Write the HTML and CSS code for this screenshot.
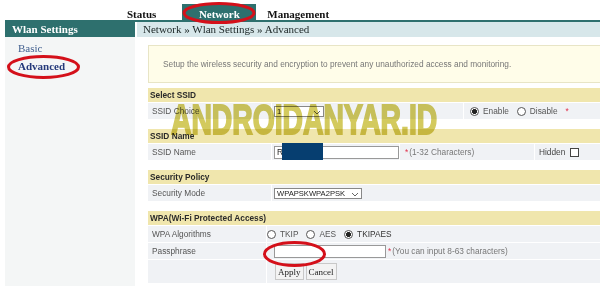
FILE: index.html
```html
<html><head><link rel="stylesheet" href="styles.css"></head><body>
<div class="topnav">
  <span class="tab">Status</span>
  <span class="tab tab-active">Network</span>
  <span class="tab">Management</span>
</div>
<div class="layout">
  <aside class="sidebar">
    <div class="side-title">Wlan Settings</div>
    <ul class="side-menu">
      <li>Basic</li>
      <li class="current">Advanced</li>
    </ul>
  </aside>
  <main class="main">
    <div class="crumb">Network &raquo; Wlan Settings &raquo; Advanced</div>
    <div class="content">
      <div class="intro">Setup the wireless security and encryption to prevent any unauthorized access and monitoring.</div>

      <div class="section">
        <div class="section-head">Select SSID</div>
        <div class="row row-ssid-choice">
          <div class="cell label">SSID Choice</div>
          <div class="cell">
            <span class="select-wrap sel-small">
              <select><option>1</option></select>
              <svg class="chev" width="8" height="5" viewBox="0 0 8 5"><path d="M1 1 L4 4 L7 1" fill="none" stroke="#666" stroke-width="1"/></svg>
            </span>
          </div>
          <div class="cell cell-radios">
            <input type="radio" name="ssid" checked><span class="opt">Enable</span>
            <input type="radio" name="ssid"><span class="opt">Disable</span>
            <span class="req">*</span>
          </div>
        </div>
      </div>

      <div class="section">
        <div class="section-head">SSID Name</div>
        <div class="row row-ssid-name">
          <div class="cell label">SSID Name</div>
          <div class="cell cell-ssid">
            <input type="text" class="text-in ssid-in" value="R">
            <span class="redact"></span>
          </div>
          <div class="cell cell-note"><span class="req">*</span>(1-32 Characters)</div>
          <div class="cell cell-hidden">Hidden <input type="checkbox"></div>
        </div>
      </div>

      <div class="section">
        <div class="section-head">Security Policy</div>
        <div class="row row-two">
          <div class="cell label">Security Mode</div>
          <div class="cell">
            <span class="select-wrap sel-mode">
              <select><option>WPAPSKWPA2PSK</option></select>
              <svg class="chev" width="8" height="5" viewBox="0 0 8 5"><path d="M1 1 L4 4 L7 1" fill="none" stroke="#666" stroke-width="1"/></svg>
            </span>
          </div>
        </div>
      </div>

      <div class="section">
        <div class="section-head">WPA(Wi-Fi Protected Access)</div>
        <div class="row row-wpa">
          <div class="cell label">WPA Algorithms</div>
          <div class="cell">
            <input type="radio" name="alg"><span class="opt">TKIP</span>
            <input type="radio" name="alg"><span class="opt">AES</span>
            <input type="radio" name="alg" checked><span class="opt opt-on">TKIPAES</span>
          </div>
        </div>
        <div class="row row-wpa">
          <div class="cell label">Passphrase</div>
          <div class="cell">
            <input type="password" class="text-in pass-in">
            <span class="note"><span class="req">*</span>(You can input 8-63 characters)</span>
          </div>
        </div>
        <div class="row row-wpa row-buttons">
          <div class="cell"></div>
          <div class="cell">
            <button class="btn btn-first">Apply</button>
            <button class="btn">Cancel</button>
          </div>
        </div>
      </div>
    </div>
  </main>
</div>

<div class="watermark">ANDROIDANYAR.ID</div>

<svg class="marks" width="600" height="286" viewBox="0 0 600 286">
  <ellipse cx="219" cy="13" rx="35" ry="9.5"/>
  <ellipse cx="43.5" cy="67" rx="35" ry="10.5"/>
  <ellipse cx="294.5" cy="254" rx="30" ry="11.5"/>
</svg>
</body></html>
```

FILE: styles.css
```css
/* Base */
body {
    margin: 0;
    background: #fff;
    font-family: "Liberation Serif", "Times New Roman", serif;
    overflow: hidden;
    position: relative;
}

/* Top navigation */
.topnav {
    height: 20px;
    display: flex;
    align-items: flex-end;
    padding-left: 127px;
    font-size: 11px;
    font-weight: bold;
}

.tab {
    height: 16px;
    box-sizing: border-box;
    padding-top: 4px;
    line-height: 12px;
    color: #111;
}

.tab-active {
    width: 74px;
    margin: 0 11px 0 26px;
    text-align: center;
    background: #2e706e;
    color: #fff;
}

/* Page layout */
.layout {
    display: flex;
    margin-left: 5px;
    border-top: 2px solid #2e706e;
    min-height: 270px;
}

.sidebar {
    width: 130px;
    margin-right: 2px;
    background: #f4f6f6;
}

.side-title {
    height: 15px;
    line-height: 14px;
    padding-left: 7px;
    background: #2e706e;
    color: #fff;
    font-size: 11px;
    font-weight: bold;
}

.side-menu {
    list-style: none;
    margin: 0;
    padding: 2px 0 0 13px;
    font-size: 11px;
}

.side-menu li {
    line-height: 18px;
    color: #42608f;
}

.side-menu .current {
    font-weight: bold;
    color: #24397a;
}

.main {
    flex: 1;
    min-width: 0;
}

.crumb {
    height: 15px;
    line-height: 14px;
    padding-left: 6px;
    background: #d7e7ea;
    color: #1b2626;
    font-size: 11px;
}

/* Form area */
.content {
    padding: 8px 0 0 11px;
    font-family: "Liberation Sans", Arial, sans-serif;
    font-size: 8.3px;
    color: #555;
}

.intro {
    height: 36px;
    display: flex;
    align-items: center;
    padding-left: 14px;
    margin-bottom: 5px;
    border: 1px solid #e8e5c6;
    border-right: none;
    background: #fffde9;
    color: #777;
}

.section {
    margin-bottom: 10px;
}

.section-head {
    height: 14px;
    line-height: 14px;
    padding-left: 2px;
    background: #f0e6ad;
    color: #2a2a2a;
    font-weight: bold;
}

.row {
    display: grid;
    column-gap: 1px;
    height: 16px;
    margin-top: 1px;
    background: #fff;
}

.row-ssid-choice { grid-template-columns: 123px 191px 1fr; }
.row-ssid-name { grid-template-columns: 123px 127px 134px 1fr; }
.row-two { grid-template-columns: 123px 1fr; }
.row-wpa { grid-template-columns: 118px 1fr; }
.row-buttons { height: 23px; }

.cell {
    display: flex;
    align-items: center;
    min-width: 0;
    padding-left: 2px;
    background: #f0f2f5;
    white-space: nowrap;
}

.row-wpa .cell { padding-left: 0; }

.label {
    padding-left: 4px;
}

.row-wpa .label { padding-left: 4px; }

.cell-radios { padding-left: 6px; }
.cell-note { padding-left: 5px; color: #777; }
.cell-hidden { padding-left: 4px; color: #444; }
.cell-ssid { position: relative; }

.req {
    color: #e0304a;
    margin-right: 1px;
}

.opt {
    margin: 0 8px 0 4px;
}

.opt-on { color: #333; }

.note {
    margin-left: 2px;
    color: #777;
}

/* Controls */
input[type="radio"] {
    appearance: none;
    width: 9px;
    height: 9px;
    margin: 0;
    border: 1px solid #555;
    border-radius: 50%;
    background: #fff;
    box-sizing: border-box;
}

input[type="radio"]:checked {
    background: radial-gradient(circle, #222 0 2.2px, #fff 2.8px);
}

input[type="checkbox"] {
    appearance: none;
    width: 9px;
    height: 9px;
    margin: 0 0 0 5px;
    border: 1px solid #444;
    background: #fff;
    box-sizing: border-box;
}

.select-wrap {
    position: relative;
    display: inline-block;
    height: 11px;
}

.select-wrap select {
    appearance: none;
    height: 11px;
    box-sizing: border-box;
    margin: 0;
    padding: 0 0 0 2px;
    border: 1px solid #888;
    border-radius: 0;
    background: #fff;
    color: #222;
    font-family: "Liberation Sans", Arial, sans-serif;
    font-size: 7.6px;
    line-height: 9px;
}

.sel-small select { width: 50px; }
.sel-mode select { width: 88px; }

.chev {
    position: absolute;
    right: 3px;
    top: 4px;
}

.text-in {
    height: 13px;
    box-sizing: border-box;
    margin: 0;
    padding: 0 2px;
    border: 1px solid #999;
    background: #fff;
    color: #222;
    font-family: "Liberation Sans", Arial, sans-serif;
    font-size: 8.3px;
}

.ssid-in { width: 125px; }
.pass-in { width: 112px; margin-left: 7px; }

.redact {
    position: absolute;
    left: 10px;
    top: -1px;
    width: 41px;
    height: 17px;
    background: #063e70;
}

.btn {
    height: 17px;
    margin: 0 2px 0 0;
    padding: 0 2px;
    border: 1px solid #c8c8c8;
    background: #f3f3f3;
    color: #222;
    font-family: "Liberation Serif", "Times New Roman", serif;
    font-size: 9px;
}

.btn-first { margin-left: 8px; }

/* Overlays */
.watermark {
    position: absolute;
    left: 171px;
    top: 98px;
    font-family: "Liberation Sans", Arial, sans-serif;
    font-size: 43px;
    font-weight: bold;
    line-height: 1;
    color: #d3ca5e;
    -webkit-text-stroke: 2px #d3ca5e;
    mix-blend-mode: multiply;
    transform: scaleX(0.658);
    transform-origin: left top;
    white-space: nowrap;
    pointer-events: none;
}

.marks {
    position: absolute;
    left: 0;
    top: 0;
    pointer-events: none;
}

.marks ellipse {
    fill: none;
    stroke: #d4101a;
    stroke-width: 3;
}
```
